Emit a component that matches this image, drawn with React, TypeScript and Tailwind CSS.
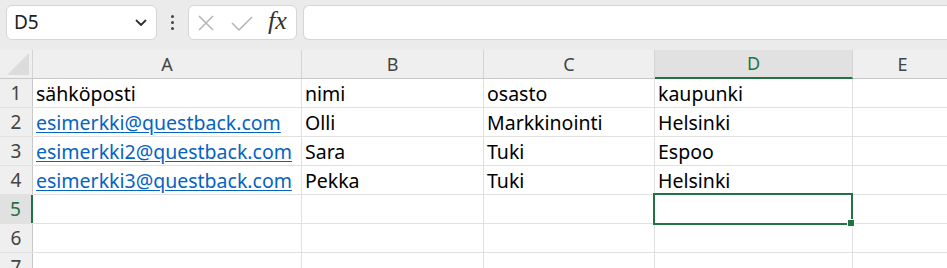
import React from "react";

const cols = [
  { name: "A", w: 269 },
  { name: "B", w: 182 },
  { name: "C", w: 171 },
  { name: "D", w: 198 },
  { name: "E", w: 100 },
];

const rows: { text: string; link?: boolean }[][] = [
  [{ text: "sähköposti" }, { text: "nimi" }, { text: "osasto" }, { text: "kaupunki" }, { text: "" }],
  [{ text: "esimerkki@questback.com", link: true }, { text: "Olli" }, { text: "Markkinointi" }, { text: "Helsinki" }, { text: "" }],
  [{ text: "esimerkki2@questback.com", link: true }, { text: "Sara" }, { text: "Tuki" }, { text: "Espoo" }, { text: "" }],
  [{ text: "esimerkki3@questback.com", link: true }, { text: "Pekka" }, { text: "Tuki" }, { text: "Helsinki" }, { text: "" }],
  [{ text: "" }, { text: "" }, { text: "" }, { text: "" }, { text: "" }],
  [{ text: "" }, { text: "" }, { text: "" }, { text: "" }, { text: "" }],
  [{ text: "" }, { text: "" }, { text: "" }, { text: "" }, { text: "" }],
];

export default function App() {
  const font = { fontFamily: '"Noto Sans", "Open Sans", sans-serif' };
  return (
    <div className="w-[947px] h-[268px] overflow-hidden bg-white relative" style={font}>
      {/* toolbar */}
      <div className="h-[50px] bg-[#ebebeb] flex items-start pt-[5px] pl-[6px] gap-0">
        <div className="w-[151px] h-[35px] bg-white rounded-[6px] border border-[#d6d6d6] flex items-center justify-between pl-[7px] pr-[9px]">
          <span className="text-[19px] text-[#222]">D5</span>
          <svg width="12" height="8" viewBox="0 0 12 8">
            <path d="M1.5 1.5 L6 6 L10.5 1.5" fill="none" stroke="#333" strokeWidth="1.8" strokeLinecap="round" strokeLinejoin="round" />
          </svg>
        </div>
        <div className="w-[31px] h-[35px] flex flex-col items-center justify-center gap-[3px]">
          <div className="w-[3px] h-[3px] rounded-full bg-[#444]" />
          <div className="w-[3px] h-[3px] rounded-full bg-[#444]" />
          <div className="w-[3px] h-[3px] rounded-full bg-[#444]" />
        </div>
        <div className="w-[109px] h-[35px] bg-white rounded-[6px] border border-[#d6d6d6] flex items-center pl-[8px]">
          <svg width="18" height="18" viewBox="0 0 18 18">
            <path d="M2 2 L16 16 M16 2 L2 16" stroke="#b4b4b4" strokeWidth="1.5" />
          </svg>
          <svg width="24" height="18" viewBox="0 0 24 18" className="ml-[15px]">
            <path d="M2 9 L9 16 L22 3" fill="none" stroke="#b4b4b4" strokeWidth="1.5" />
          </svg>
          <span
            className="ml-[14px] text-[26px] italic text-[#333] leading-none -mt-[3px]"
            style={{ fontFamily: '"Liberation Serif", "DejaVu Serif", serif' }}
          >
            fx
          </span>
        </div>
        <div className="ml-[6px] flex-1 h-[35px] bg-white rounded-l-[6px] border border-r-0 border-[#d6d6d6]" />
      </div>

      {/* header row */}
      <div className="flex h-[29px] bg-[#efefef] border-b border-[#c8c8c8]">
        <div className="w-[33px] shrink-0 border-r border-[#d4d4d4] relative">
          <svg className="absolute right-[3px] bottom-[3px]" width="22" height="22" viewBox="0 0 22 22">
            <path d="M22 0 L22 22 L0 22 Z" fill="#dcdcdc" />
          </svg>
        </div>
        {cols.map((c) => {
          const sel = c.name === "D";
          return (
            <div
              key={c.name}
              className={
                sel
                  ? "shrink-0 flex items-center justify-center text-[18px] bg-[#e1e1e1] text-[#217346] border-r border-[#d4d4d4] border-b-2 border-b-[#217346] -mb-px"
                  : "shrink-0 flex items-center justify-center text-[18px] text-[#444] border-r border-[#d4d4d4]"
              }
              style={{ width: c.w }}
            >
              {c.name}
            </div>
          );
        })}
      </div>

      {/* grid rows */}
      {rows.map((r, i) => {
        const sel = i === 4;
        return (
          <div key={i} className="flex h-[29px] border-b border-[#e1e1e1]">
            <div
              className={
                sel
                  ? "w-[33px] shrink-0 bg-[#e1e1e1] border-r-2 border-[#217346] flex items-center justify-center text-[19px] text-[#217346]"
                  : "w-[33px] shrink-0 bg-[#efefef] border-r border-[#c8c8c8] flex items-center justify-center text-[19px] text-[#444]"
              }
            >
              {i + 1}
            </div>
            {cols.map((c, j) => (
              <div
                key={c.name}
                className="shrink-0 border-r border-[#e1e1e1] flex items-end pb-[0px] pl-[3px] text-[19.5px] leading-[26px] whitespace-nowrap overflow-visible relative"
                style={{ width: c.w }}
              >
                {r[j].text ? (
                  <span className={r[j].link ? "text-[#0563c1] underline underline-offset-2 relative z-10" : "text-black relative z-10"}>
                    {r[j].text}
                  </span>
                ) : null}
              </div>
            ))}
          </div>
        );
      })}

      {/* selection box for D5 */}
      <div className="absolute left-[653px] top-[193px] w-[200px] h-[32px] border-2 border-[#217346] pointer-events-none">
        <div className="absolute -right-[4px] -bottom-[4px] w-[6px] h-[6px] bg-[#217346] border border-white box-content" />
      </div>
    </div>
  );
}
